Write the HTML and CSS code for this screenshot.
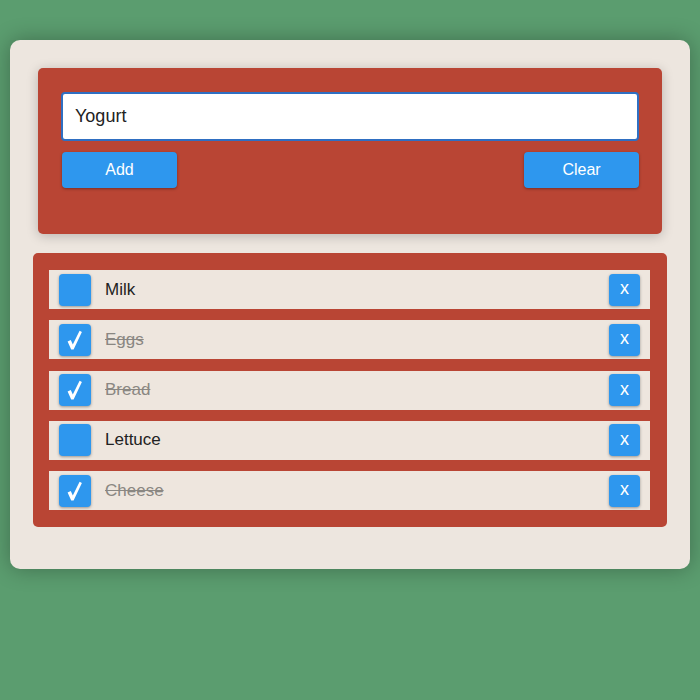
FILE: index.html
```html
<!DOCTYPE html>
<html lang="en">
<head>
<meta charset="utf-8">
<title>Shopping list</title>
<link rel="stylesheet" href="styles.css">
</head>
<body>
<div class="card">
  <div class="form-panel">
    <input class="item-input" type="text" value="Yogurt">
    <div class="actions">
      <button class="btn">Add</button>
      <button class="btn">Clear</button>
    </div>
  </div>
  <ul class="list">
    <li class="row">
      <span class="check"></span>
      <span class="label">Milk</span>
      <button class="remove">x</button>
    </li>
    <li class="row done">
      <span class="check"><svg viewBox="0 0 32 32" width="32" height="32"><path d="M8.6 17.6 L11.8 15.9 L13.8 20.6 L20.6 6.8 L22.9 8.1 L14.6 25.6 L12.2 25.6 Z" fill="#fff"/></svg></span>
      <span class="label">Eggs</span>
      <button class="remove">x</button>
    </li>
    <li class="row done">
      <span class="check"><svg viewBox="0 0 32 32" width="32" height="32"><path d="M8.6 17.6 L11.8 15.9 L13.8 20.6 L20.6 6.8 L22.9 8.1 L14.6 25.6 L12.2 25.6 Z" fill="#fff"/></svg></span>
      <span class="label">Bread</span>
      <button class="remove">x</button>
    </li>
    <li class="row">
      <span class="check"></span>
      <span class="label">Lettuce</span>
      <button class="remove">x</button>
    </li>
    <li class="row done">
      <span class="check"><svg viewBox="0 0 32 32" width="32" height="32"><path d="M8.6 17.6 L11.8 15.9 L13.8 20.6 L20.6 6.8 L22.9 8.1 L14.6 25.6 L12.2 25.6 Z" fill="#fff"/></svg></span>
      <span class="label">Cheese</span>
      <button class="remove">x</button>
    </li>
  </ul>
</div>
</body>
</html>
```
FILE: styles.css
```css
html, body {
  margin: 0;
  padding: 0;
}
body {
  background: #5b9d6f;
  font-family: "Liberation Sans", Arial, sans-serif;
  padding: 40px 10px 0;
  height: 700px;
  box-sizing: border-box;
}
.card {
  background: #ede6df;
  border-radius: 10px;
  padding: 28px 23px 42px;
  box-shadow: 0 0 22px rgba(0, 0, 0, 0.3);
}
.form-panel {
  margin: 0 5px;
  background: #b94534;
  border-radius: 5px;
  padding: 24px 23px 46px;
  box-shadow: 0 2px 12px rgba(0, 0, 0, 0.22);
}
.item-input {
  display: block;
  width: 100%;
  height: 49px;
  box-sizing: border-box;
  border: 2px solid #2f6fc2;
  border-radius: 4px;
  background: #fff;
  padding: 0 12px;
  font-family: "Liberation Sans", Arial, sans-serif;
  font-size: 18px;
  color: #222;
  outline: none;
}
.actions {
  display: flex;
  justify-content: space-between;
  margin-top: 11px;
  padding-left: 1px;
}
.btn {
  width: 115px;
  height: 36px;
  border: none;
  border-radius: 4px;
  background: #2e97ee;
  color: #fff;
  font-family: "Liberation Sans", Arial, sans-serif;
  font-size: 16px;
  box-shadow: 0 1px 3px rgba(0, 0, 0, 0.35);
  padding: 0;
}
.list {
  list-style: none;
  margin: 19px 0 0;
  padding: 17px 17px 17px 16px;
  background: #b94534;
  border-radius: 5px;
  display: flex;
  flex-direction: column;
  gap: 11.25px;
}
.row {
  display: flex;
  align-items: center;
  height: 39px;
  padding: 0 10px;
  background: #eee6de;
}
.check {
  width: 32px;
  height: 32px;
  border-radius: 4px;
  background: #2e97ee;
  box-shadow: 0 1px 3px rgba(0, 0, 0, 0.35);
  flex: none;
}
.check svg {
  display: block;
}
.label {
  margin-left: 14px;
  font-size: 17px;
  color: #222;
}
.done .label {
  color: #8a8782;
  text-decoration: line-through;
}
.remove {
  margin-left: auto;
  width: 31px;
  height: 32px;
  border: none;
  border-radius: 4px;
  background: #2e97ee;
  color: #fff;
  font-family: "Liberation Sans", Arial, sans-serif;
  font-size: 18px;
  padding: 0 0 2px;
  box-shadow: 0 1px 3px rgba(0, 0, 0, 0.35);
}
```
